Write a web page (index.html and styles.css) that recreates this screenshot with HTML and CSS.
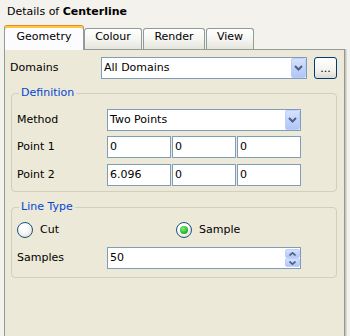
FILE: index.html
```html
<!DOCTYPE html>
<html>
<head>
<meta charset="utf-8">
<title>Details of Centerline</title>
<link rel="stylesheet" href="styles.css">
</head>
<body>
<div class="title">Details of <b>Centerline</b></div>
<div class="tabs">
  <div class="tab active t-geo">Geometry</div>
  <div class="tab t-col">Colour</div>
  <div class="tab t-ren">Render</div>
  <div class="tab t-view">View</div>
</div>
<div class="panel">
  <div class="row domains">
    <span class="lbl lbl-d">Domains</span>
    <div class="field combo combo-d">
      <span class="val">All Domains</span>
      <span class="drop"><svg width="9" height="6" viewBox="0 0 9 6"><path d="M1 1 L4.5 4.5 L8 1" fill="none" stroke="#4d6185" stroke-width="2"/></svg></span>
    </div>
    <div class="dots">...</div>
  </div>

  <fieldset class="group def">
    <legend>Definition</legend>
    <div class="row r-method">
      <span class="lbl">Method</span>
      <div class="field combo combo-m">
        <span class="val">Two Points</span>
        <span class="drop"><svg width="9" height="6" viewBox="0 0 9 6"><path d="M1 1 L4.5 4.5 L8 1" fill="none" stroke="#4d6185" stroke-width="2"/></svg></span>
      </div>
    </div>
    <div class="row r-p1">
      <span class="lbl">Point 1</span>
      <div class="triple">
        <div class="field cell">0</div>
        <div class="field cell">0</div>
        <div class="field cell">0</div>
      </div>
    </div>
    <div class="row r-p2">
      <span class="lbl">Point 2</span>
      <div class="triple">
        <div class="field cell">6.096</div>
        <div class="field cell">0</div>
        <div class="field cell">0</div>
      </div>
    </div>
  </fieldset>

  <fieldset class="group lt">
    <legend>Line Type</legend>
    <div class="radios">
      <div class="opt opt-cut"><span class="radio"></span><span>Cut</span></div>
      <div class="opt"><span class="radio checked"></span><span>Sample</span></div>
    </div>
    <div class="row r-samples">
      <span class="lbl">Samples</span>
      <div class="field spin">
        <span class="val">50</span>
        <span class="spinbtns">
          <span class="sb"><svg width="7" height="4" viewBox="0 0 7 4"><path d="M0.5 3.5 L3.5 0.8 L6.5 3.5" fill="none" stroke="#4d6185" stroke-width="1.6"/></svg></span>
          <span class="sb"><svg width="7" height="4" viewBox="0 0 7 4"><path d="M0.5 0.5 L3.5 3.2 L6.5 0.5" fill="none" stroke="#4d6185" stroke-width="1.6"/></svg></span>
        </span>
      </div>
    </div>
  </fieldset>
</div>
</body>
</html>
```

FILE: styles.css
```css
* { box-sizing: border-box; }
html, body { margin: 0; height: 100%; }
body {
  background: #f3f2ec;
  font: 11px/14px "DejaVu Sans", "Liberation Sans", sans-serif;
  color: #000;
  overflow: hidden;
  display: flex;
  flex-direction: column;
}

.title { padding: 5px 0 0 7px; height: 25px; flex: none; }
.title b { font-weight: bold; }

.tabs {
  display: flex;
  align-items: flex-end;
  height: 24px;
  padding-left: 4px;
  position: relative;
  z-index: 1;
  flex: none;
}
.tab {
  height: 21px;
  border: 1px solid #919b9c;
  border-bottom: none;
  border-radius: 3px 3px 0 0;
  background: linear-gradient(#ffffff, #f4f4f0 55%, #e6e5de);
  text-align: center;
  padding-top: 1px;
}
.tab.active {
  height: 25px;
  margin-bottom: -1px;
  background: #fcfcfe;
  border-top: 1px solid #e68b2c;
  box-shadow: inset 0 2px 0 #ffc73c;
  padding-top: 4px;
}
.t-geo { width: 80px; }
.t-col { width: 58px; }
.t-ren { width: 62px; margin-left: 1px; }
.t-view { width: 48px; margin-left: 1px; }

.panel {
  flex: 1;
  margin-left: 4px;
  width: 341px;
  border: 1px solid #919b9c;
  border-bottom: none;
  background: #ece9d8;
  padding: 7px 0 0 5px;
  box-shadow: 1px 0 0 #c5c3b6, 2px 0 0 #dedcd2;
}

.row { display: flex; align-items: center; height: 22px; }
.lbl { flex: none; width: 90px; }
.lbl-d { width: 91px; }

.field {
  background: #fff;
  border: 1px solid #7f9db9;
  height: 22px;
  padding-left: 2px;
}
.combo, .spin {
  display: flex;
  align-items: center;
}
.val { flex: 1; }
.combo-d { width: 206px; }
.combo-m { width: 194px; }
.drop {
  flex: none;
  align-self: stretch;
  width: 15px;
  margin-right: 0;
  border: 1px solid #bccefa;
  border-radius: 2px;
  background: linear-gradient(#d6e2fd, #c1d3fb 50%, #b1c6f7);
  display: flex;
  align-items: center;
  justify-content: center;
}

.dots {
  margin-left: 7px;
  width: 23px;
  height: 22px;
  border: 1px solid #003c74;
  border-radius: 3px;
  background: linear-gradient(#ffffff, #f3f3ee 60%, #dcdad0);
  text-align: center;
  line-height: 22px;
  padding-top: 0;
}

.group {
  margin: 7px 0 0 1px;
  width: 326px;
  border: 1px solid #d0d0bf;
  border-radius: 4px;
  padding: 9px 0 5px 5px;
  min-width: 0;
}
.group legend {
  color: #0046d5;
  padding: 0 2px;
  margin-left: 2px;
}
.r-p1 { margin-top: 5px; }
.r-p2 { margin-top: 6px; }

.triple { display: flex; gap: 1px; }
.cell { width: 64px; line-height: 20px; }

.lt { margin-top: 8px; padding: 8px 0 8px 5px; }
.radios { display: flex; height: 16px; align-items: center; }
.opt { display: flex; align-items: center; gap: 7px; }
.opt-cut { width: 159px; }
.radio {
  width: 16px;
  height: 16px;
  border-radius: 50%;
  border: 1px solid #1c5180;
  background: radial-gradient(circle at 40% 35%, #ffffff 30%, #e2e1da 80%, #d1d0c6);
  display: flex;
  align-items: center;
  justify-content: center;
}
.radio.checked::after {
  content: "";
  width: 8px;
  height: 8px;
  border-radius: 50%;
  background: radial-gradient(circle at 40% 35%, #7bf07f, #2cb82f 60%, #1a8a1d);
}

.r-samples { margin-top: 9px; }
.spin { width: 194px; padding-right: 0; }
.spinbtns {
  flex: none;
  display: flex;
  flex-direction: column;
  gap: 0;
  align-self: stretch;
  padding: 1px 0;
  width: 15px;
}
.sb {
  flex: 1;
  border: 1px solid #bccefa;
  border-radius: 2px;
  background: linear-gradient(#d6e2fd, #c1d3fb 50%, #b1c6f7);
  display: flex;
  align-items: center;
  justify-content: center;
}
```
